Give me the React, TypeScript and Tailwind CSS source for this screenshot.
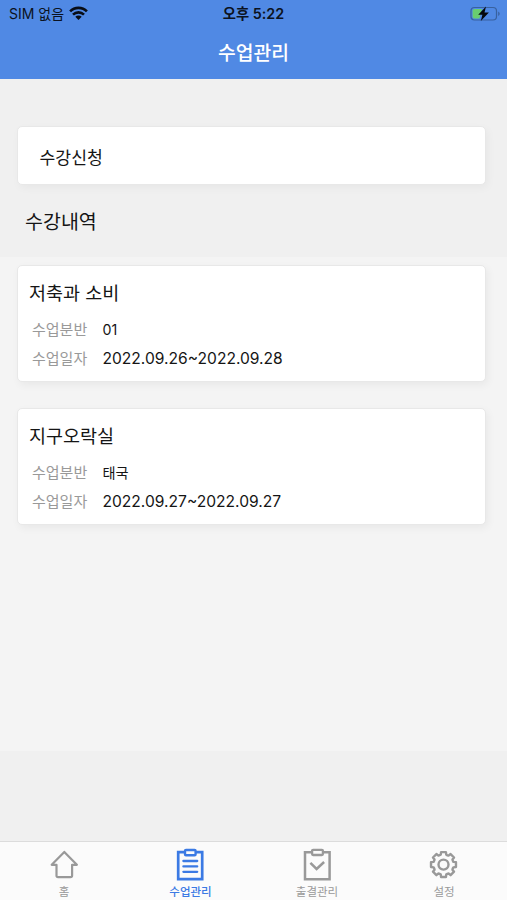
import React from "react";

interface Course {
  title: string;
  group: string;
  period: string;
}

const courses: Course[] = [
  { title: "저축과 소비", group: "01", period: "2022.09.26~2022.09.28" },
  { title: "지구오락실", group: "태국", period: "2022.09.27~2022.09.27" },
];

const WifiIcon = () => (
  <svg width="19" height="14" viewBox="0 0 19 14" fill="none" stroke="#080d16" strokeWidth="2.6">
    <path d="M1.1 5.3C5.6 0.7 13.4 0.7 17.9 5.3" />
    <path d="M4 8.6C7.1 5.6 11.9 5.6 15 8.6" />
    <path d="M9.5 14L6.3 10.7C8 9.1 11 9.1 12.7 10.7Z" fill="#080d16" stroke="none" />
  </svg>
);

const BatteryIcon = () => (
  <svg width="31" height="16" viewBox="0 0 31 16" fill="none">
    <rect x="1" y="1.5" width="25.5" height="12.5" rx="3.5" stroke="#38619f" strokeWidth="1.2" />
    <path d="M28.2 5.5C30.2 6.4 30.2 9.1 28.2 10Z" fill="#38619f" />
    <path d="M4.5 3H12L9.5 12.5H4.5C3.3 12.5 2.6 11.8 2.6 10.6V4.9C2.6 3.7 3.3 3 4.5 3Z" fill="#69cd70" />
    <path d="M16 0.6L8.2 8.8H12.4L10.8 15L18.9 6.6H14.5Z" fill="#05080d" />
  </svg>
);

const HomeIcon = () => (
  <svg width="30" height="34" viewBox="0 0 30 34" fill="none" stroke="currentColor" strokeWidth="2.2" strokeLinejoin="round">
    <path d="M15.3 3.9L27.9 16.8H23.1V27.6Q23.1 29.2 21.5 29.2H9.1Q7.5 29.2 7.5 27.6V16.8H2.7Z" />
  </svg>
);

const ListIcon = () => (
  <svg width="30" height="34" viewBox="0 0 30 34" fill="none" stroke="currentColor" strokeWidth="2.7">
    <path d="M9.2 4.2H2.2V31.2H26.2V4.2H19.6" />
    <rect x="9" y="2" width="10.6" height="5.2" rx="1" strokeWidth="2.4" />
    <path d="M7.4 13H21.2M7.4 18.4H21.2M7.4 23.8H21.2" strokeWidth="2.3" strokeLinecap="round" />
  </svg>
);

const CheckIcon = () => (
  <svg width="30" height="34" viewBox="0 0 30 34" fill="none" stroke="currentColor" strokeWidth="2.5">
    <path d="M9.9 4.2H3V31.2H27.6V4.2H20.9" />
    <rect x="10.1" y="1.8" width="10.8" height="5.2" rx="1" strokeWidth="2.3" />
    <path d="M8.4 14.8L14.6 21L22.1 14" />
  </svg>
);

// Outline of an eight-toothed gear
const gearPath =
  Array.from({ length: 8 })
    .flatMap((_, i) =>
      [
        [-15.5, 10.3],
        [-11, 12.7],
        [11, 12.7],
        [15.5, 10.3],
      ].map(([deg, r]) => {
        const a = ((i * 45 + deg) * Math.PI) / 180;
        return `${(14.5 + r * Math.sin(a)).toFixed(2)} ${(16.6 - r * Math.cos(a)).toFixed(2)}`;
      })
    )
    .map((p, i) => {
      if (i === 0) return `M${p}`;
      return i % 4 === 0 ? `A4 4 0 0 0 ${p}` : `L${p}`;
    })
    .join("") + "Z";

const GearIcon = () => (
  <svg width="30" height="34" viewBox="0 0 30 34" fill="none" stroke="currentColor" strokeWidth="2.4" strokeLinejoin="round">
    <path d={gearPath} />
    <circle cx="14.5" cy="16.6" r="5" />
  </svg>
);

const tabs = [
  { label: "홈", icon: HomeIcon, active: false },
  { label: "수업관리", icon: ListIcon, active: true },
  { label: "출결관리", icon: CheckIcon, active: false },
  { label: "설정", icon: GearIcon, active: false },
];

const CourseCard: React.FC<Course> = ({ title, group, period }) => {
  return (
    <div className="h-[117px] rounded-[5px] border border-[#e8e8e8] bg-white pl-[11px] pt-[13px] shadow-[2px_3px_8px_rgba(0,0,0,0.05)]">
      <h3 className="text-[18.5px] leading-[28px] text-[#151515]">{title}</h3>
      <div className="mt-[9px] flex h-[28px] items-center pl-[3px]">
        <span className="w-[70.5px] text-[15px] text-[#999999]">수업분반</span>
        <span className="text-[14.2px] text-[#151515]">{group}</span>
      </div>
      <div className="mt-[1px] flex h-[28px] items-center pl-[3px]">
        <span className="w-[70.5px] text-[15px] text-[#999999]">수업일자</span>
        <span className="text-[15.6px] text-[#151515]">{period}</span>
      </div>
    </div>
  );
};

const App: React.FC = () => {
  return (
    <div className="flex h-[900px] w-[507px] flex-col overflow-hidden bg-[#f0f0f0] font-[Inter,'Noto_Sans_CJK_KR',sans-serif] whitespace-nowrap">
      {/* Header */}
      <header className="h-[79px] bg-[#5089e4]">
        <div className="grid h-[28px] grid-cols-3 items-center text-[#0b1220]">
          <div className="flex items-center gap-[5px] pb-[2px] pl-[9px] text-[14px]">
            <span>SIM 없음</span>
            <WifiIcon />
          </div>
          <div className="text-center text-[14.3px] font-semibold">오후 5:22</div>
          <div className="flex justify-end pb-[1px] pr-[6px]">
            <BatteryIcon />
          </div>
        </div>
        <h1 className="text-center text-[19.3px] font-medium leading-[50px] text-white">수업관리</h1>
      </header>

      {/* Apply */}
      <div className="h-[178px] pl-[17px] pr-[21px] pt-[47px]">
        <div className="flex h-[59px] items-center rounded-[5px] border border-[#e8e8e8] bg-white pl-[21.5px] pt-[5px] text-[17.2px] text-[#151515] shadow-[2px_3px_8px_rgba(0,0,0,0.04)]">
          수강신청
        </div>
        <h2 className="mt-[22px] pl-[8px] text-[19.5px] leading-[30px] text-[#151515]">수강내역</h2>
      </div>

      {/* Course list */}
      <main className="flex h-[494px] flex-col gap-[26px] bg-[#f4f4f4] pl-[17px] pr-[21px] pt-[8px]">
        {courses.map((course) => (
          <CourseCard key={course.title} {...course} />
        ))}
      </main>

      {/* Tab bar */}
      <nav className="mt-auto grid h-[59px] grid-cols-[128px_125px_128px_126px] border-t border-[#dcdcdc] bg-[#fbfbfb]">
        {tabs.map(({ label, icon: Icon, active }) => (
          <div
            key={label}
            className={`flex flex-col items-center pt-[6px] ${active ? "text-[#3b7ae4]" : "text-[#999999]"}`}
          >
            <Icon />
            <span className={`mt-[2px] text-[11.5px] leading-[16px] ${active ? "font-medium" : ""}`}>{label}</span>
          </div>
        ))}
      </nav>
    </div>
  );
};

export default App;
